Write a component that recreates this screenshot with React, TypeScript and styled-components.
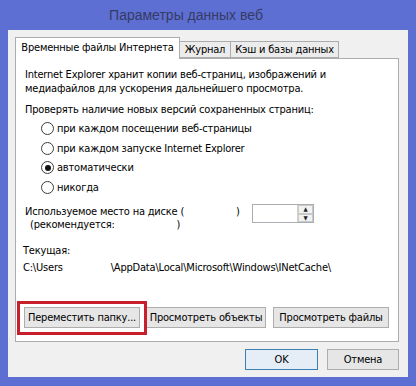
import styled, { createGlobalStyle } from "styled-components";

const GlobalStyle = createGlobalStyle`
  html, body {
    margin: 0;
    padding: 0;
  }
  body {
    font-family: "DejaVu Sans Condensed", "DejaVu Sans", sans-serif;
    font-size: 11px;
    letter-spacing: -0.2px;
    color: #000;
  }
`;

const Frame = styled.div`
  width: 416px;
  height: 386px;
  box-sizing: border-box;
  background: #5e6fd4;
  padding: 0 8px 9px;
  display: flex;
  flex-direction: column;
`;

const TitleBar = styled.div`
  height: 30px;
  display: flex;
  align-items: center;
  justify-content: center;
  padding-right: 44px;
  font-family: "Liberation Sans", Arial, sans-serif;
  font-size: 14px;
  letter-spacing: 0;
  color: #353b63;
`;

const Client = styled.div`
  flex: 1;
  background: #f0f0f0;
  padding: 8px 9px 0 7px;
  display: flex;
  flex-direction: column;
`;

const TabStrip = styled.div`
  display: flex;
  align-items: flex-end;
  height: 21px;
  margin-bottom: -1px;
  position: relative;
  z-index: 1;
`;

const Tab = styled.div<{ $active?: boolean; $w: number }>`
  box-sizing: border-box;
  width: ${(p) => p.$w}px;
  height: ${(p) => (p.$active ? 22 : 17)}px;
  margin-bottom: ${(p) => (p.$active ? 0 : 1)}px;
  border: 1px solid #acacac;
  border-bottom: ${(p) => (p.$active ? "none" : "1px solid #acacac")};
  border-left: ${(p) => (p.$active ? "1px solid #acacac" : "none")};
  background: ${(p) => (p.$active ? "#fff" : "#ececec")};
  display: flex;
  align-items: center;
  justify-content: center;
  padding-bottom: ${(p) => (p.$active ? 3 : 0)}px;
  white-space: nowrap;
`;

const Panel = styled.div`
  height: 284px;
  box-sizing: border-box;
  background: #fff;
  border: 1px solid #acacac;
  padding: 9px 9px 13px;
  display: flex;
  flex-direction: column;
`;

const Para = styled.div`
  line-height: 14px;
`;

const Heading = styled.div`
  line-height: 14px;
  margin-top: 7px;
`;

const RadioList = styled.div`
  margin-top: 2px;
  padding-left: 16px;
  display: flex;
  flex-direction: column;
`;

const RadioRow = styled.label`
  height: 19.5px;
  display: flex;
  align-items: center;
  gap: 3px;
`;

const RadioCircle = styled.span<{ $checked?: boolean }>`
  width: 13px;
  height: 13px;
  box-sizing: border-box;
  border-radius: 50%;
  border: 1px solid #3c3c3c;
  background: #fff;
  display: flex;
  align-items: center;
  justify-content: center;
  &::after {
    content: "";
    width: 6px;
    height: 6px;
    border-radius: 50%;
    background: ${(p) => (p.$checked ? "#111" : "transparent")};
  }
`;

const DiskRow = styled.div`
  margin-top: 8px;
  display: flex;
  align-items: flex-start;
`;

const DiskLabel = styled.div`
  line-height: 13px;
  width: 227px;
`;

const Indented = styled.div`
  padding-left: 5px;
`;

const Blank = styled.span<{ $w: number }>`
  display: inline-block;
  width: ${(p) => p.$w}px;
`;

const SpinBox = styled.div`
  width: 62px;
  height: 19px;
  box-sizing: border-box;
  border: 1px solid #abadb3;
  background: #fff;
  display: flex;
  justify-content: flex-end;
  margin-top: -1px;
`;

const SpinButtons = styled.div`
  width: 15px;
  display: flex;
  flex-direction: column;
  border-left: 1px solid #d4d4d4;
`;

const SpinButton = styled.div`
  flex: 1;
  display: flex;
  align-items: center;
  justify-content: center;
  background: #f2f2f2;
  border: 1px solid #c9c9c9;
  font-size: 6px;
  line-height: 1;
  color: #222;
`;

const Current = styled.div`
  margin-top: 13px;
  margin-left: -2px;
  line-height: 14px;
`;

const PathLine = styled.div`
  margin-top: 3px;
  margin-left: -2px;
  line-height: 14px;
  white-space: nowrap;
`;

const ButtonRow = styled.div`
  margin-top: auto;
  margin-left: -1px;
  display: flex;
  gap: 6px;
`;

const Highlight = styled.div`
  position: relative;
  display: flex;
  &::after {
    content: "";
    position: absolute;
    top: -6px;
    bottom: -7px;
    left: -7px;
    right: -7px;
    border: 3px solid #c71f2c;
    pointer-events: none;
  }
`;

const Button = styled.button<{ $w: number; $default?: boolean }>`
  width: ${(p) => p.$w}px;
  height: 21px;
  box-sizing: border-box;
  padding: 0;
  font-family: inherit;
  font-size: 11px;
  letter-spacing: -0.2px;
  color: #000;
  background: ${(p) => (p.$default ? "#e5eef7" : "#e6e6e6")};
  border: 1px solid ${(p) => (p.$default ? "#3c7fb1" : "#adadad")};
  border-radius: 0;
  white-space: nowrap;
`;

const Footer = styled.div`
  display: flex;
  justify-content: flex-end;
  gap: 9px;
  margin-top: 7px;
`;

function App() {
  return (
    <Frame>
      <GlobalStyle />
      <TitleBar>Параметры данных веб</TitleBar>
      <Client>
        <TabStrip>
          <Tab $active $w={165}>Временные файлы Интернета</Tab>
          <Tab $w={51}>Журнал</Tab>
          <Tab $w={108}>Кэш и базы данных</Tab>
        </TabStrip>
        <Panel>
          <Para>
            Internet Explorer хранит копии веб-страниц, изображений и
            <br />
            медиафайлов для ускорения дальнейшего просмотра.
          </Para>
          <Heading>Проверять наличие новых версий сохраненных страниц:</Heading>
          <RadioList>
            <RadioRow>
              <RadioCircle />
              при каждом посещении веб-страницы
            </RadioRow>
            <RadioRow>
              <RadioCircle />
              при каждом запуске Internet Explorer
            </RadioRow>
            <RadioRow>
              <RadioCircle $checked />
              автоматически
            </RadioRow>
            <RadioRow>
              <RadioCircle />
              никогда
            </RadioRow>
          </RadioList>
          <DiskRow>
            <DiskLabel>
              Используемое место на диске (<Blank $w={52} />)
              <Indented>
                (рекомендуется:<Blank $w={62} />)
              </Indented>
            </DiskLabel>
            <SpinBox>
              <SpinButtons>
                <SpinButton>▲</SpinButton>
                <SpinButton>▼</SpinButton>
              </SpinButtons>
            </SpinBox>
          </DiskRow>
          <Current>Текущая:</Current>
          <PathLine>
            C:\Users<Blank $w={48} />\AppData\Local\Microsoft\Windows\INetCache\
          </PathLine>
          <ButtonRow>
            <Highlight>
              <Button $w={116}>Переместить папку...</Button>
            </Highlight>
            <Button $w={120}>Просмотреть объекты</Button>
            <Button $w={116} style={{ marginLeft: 1 }}>
              Просмотреть файлы
            </Button>
          </ButtonRow>
        </Panel>
        <Footer>
          <Button $w={73} $default>
            OK
          </Button>
          <Button $w={72}>Отмена</Button>
        </Footer>
      </Client>
    </Frame>
  );
}

export default App;
